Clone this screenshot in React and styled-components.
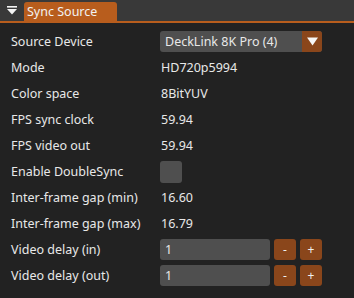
import React from 'react'
import styled, { createGlobalStyle } from 'styled-components'

const Global = createGlobalStyle`
  html, body {
    margin: 0;
    padding: 0;
    background: #222222;
  }
  body {
    font-family: 'Noto Sans', 'Liberation Sans', sans-serif;
    font-size: 12px;
    color: #e8e8e8;
  }
`

const Window = styled.div`
  width: 354px;
  height: 298px;
  background: #222222;
  overflow: hidden;
`

const TabBar = styled.div`
  display: flex;
  align-items: flex-end;
  height: 21px;
  background: #393939;
  border-bottom: 2px solid #b85d1d;
  padding-left: 6px;
  gap: 6px;
`

const MenuButton = styled.div`
  width: 12px;
  height: 21px;
  display: flex;
  align-items: center;
  justify-content: center;
`

const Tab = styled.div`
  width: 93px;
  height: 19px;
  background: #b85d1d;
  border-radius: 3px 3px 0 0;
  color: #f2f2f2;
  font-size: 12.5px;
  line-height: 19px;
  padding-left: 3px;
  box-sizing: border-box;
`

const Grid = styled.div`
  display: grid;
  grid-template-columns: 149px 162px;
  grid-auto-rows: 21px;
  row-gap: 5px;
  padding: 8px 11px;
  align-items: center;
`

const Label = styled.div`
  font-size: 12.5px;
  white-space: nowrap;
`

const Value = styled.div`
  font-size: 12.5px;
  padding-left: 1px;
`

const Combo = styled.div`
  display: flex;
  height: 21px;
  background: #4f4f4f;
  border-radius: 3px;
  overflow: hidden;
`

const ComboText = styled.div`
  flex: 1;
  padding-left: 5px;
  line-height: 21px;
  font-size: 12.5px;
`

const ComboArrow = styled.div`
  width: 20px;
  background: #8a461b;
  display: flex;
  align-items: center;
  justify-content: center;
`

const Check = styled.div`
  width: 22px;
  height: 22px;
  background: #4f4f4f;
  border-radius: 3px;
`

const Stepper = styled.div`
  display: flex;
  gap: 4px;
  height: 21px;
`

const Input = styled.div`
  width: 110px;
  background: #4f4f4f;
  border-radius: 3px;
  padding-left: 5px;
  box-sizing: border-box;
  line-height: 21px;
  font-size: 12.5px;
`

const StepButton = styled.div`
  width: 22px;
  background: #8a461b;
  border-radius: 3px;
  color: #f0f0f0;
  display: flex;
  align-items: center;
  justify-content: center;
  font-size: 12px;
`

function MenuIcon() {
  return (
    <svg width="10" height="9" viewBox="0 0 10 9">
      <rect x="0" y="0" width="10" height="1.6" fill="#f4f4f4" />
      <polygon points="0,3 10,3 5,8.5" fill="#f4f4f4" />
    </svg>
  )
}

function ComboIcon() {
  return (
    <svg width="11" height="9" viewBox="0 0 11 9">
      <polygon points="0,0.5 11,0.5 5.5,8.5" fill="#f6f6f6" />
    </svg>
  )
}

function StepperRow({ value }) {
  return (
    <Stepper>
      <Input>{value}</Input>
      <StepButton>-</StepButton>
      <StepButton>+</StepButton>
    </Stepper>
  )
}

const rows = [
  ['Mode', 'HD720p5994'],
  ['Color space', '8BitYUV'],
  ['FPS sync clock', '59.94'],
  ['FPS video out', '59.94'],
]

export default function App() {
  return (
    <Window>
      <Global />
      <TabBar>
        <MenuButton><MenuIcon /></MenuButton>
        <Tab>Sync Source</Tab>
      </TabBar>
      <Grid>
        <Label>Source Device</Label>
        <Combo>
          <ComboText>DeckLink 8K Pro (4)</ComboText>
          <ComboArrow><ComboIcon /></ComboArrow>
        </Combo>
        {rows.map(([k, v]) => (
          <React.Fragment key={k}>
            <Label>{k}</Label>
            <Value>{v}</Value>
          </React.Fragment>
        ))}
        <Label>Enable DoubleSync</Label>
        <Check />
        <Label>Inter-frame gap (min)</Label>
        <Value>16.60</Value>
        <Label>Inter-frame gap (max)</Label>
        <Value>16.79</Value>
        <Label>Video delay (in)</Label>
        <StepperRow value="1" />
        <Label>Video delay (out)</Label>
        <StepperRow value="1" />
      </Grid>
    </Window>
  )
}
